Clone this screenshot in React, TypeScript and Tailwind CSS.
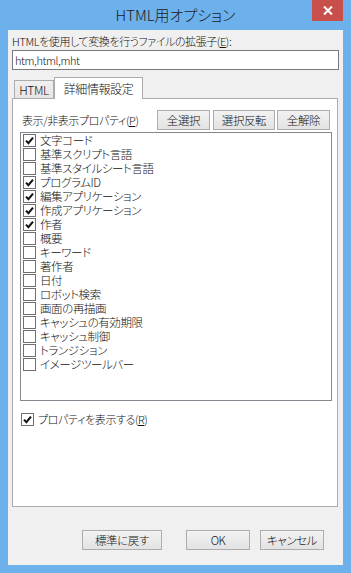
import React from "react";

const font = "font-['Noto_Sans_CJK_JP','Noto_Sans',sans-serif] [font-feature-settings:'palt']";

const props: [string, boolean][] = [
  ["文字コード", true],
  ["基準スクリプト言語", false],
  ["基準スタイルシート言語", false],
  ["プログラムID", true],
  ["編集アプリケーション", true],
  ["作成アプリケーション", true],
  ["作者", true],
  ["概要", false],
  ["キーワード", false],
  ["著作者", false],
  ["日付", false],
  ["ロボット検索", false],
  ["画面の再描画", false],
  ["キャッシュの有効期限", false],
  ["キャッシュ制御", false],
  ["トランジション", false],
  ["イメージツールバー", false],
];

function Check({ checked }: { checked: boolean }) {
  return (
    <span className="w-[13px] h-[13px] border border-[#707070] bg-white flex items-center justify-center shrink-0">
      {checked && (
        <svg width="9" height="9" viewBox="0 0 9 9">
          <path d="M1 4.6 L3.4 7.2 L8 1.6" stroke="#151515" strokeWidth="2.1" fill="none" />
        </svg>
      )}
    </span>
  );
}

function Btn({ w, children }: { w: string; children: React.ReactNode }) {
  return (
    <button
      className={`${w} h-[20px] border border-[#adadad] bg-gradient-to-b from-[#f2f2f2] to-[#e3e3e3] text-[11.5px] leading-[18px] text-[#111] flex items-center justify-center`}
    >
      {children}
    </button>
  );
}

export default function App() {
  return (
    <div className={`w-[351px] h-[573px] bg-[#6cb0ec] flex flex-col ${font} font-light text-[11px] tracking-[-0.4px] text-[#111]`}>
      {/* Title bar */}
      <div className="relative h-[30px] flex items-center justify-center">
        <span className="text-[15px] tracking-normal text-[#1c1c1c] pt-[1px]">HTML用オプション</span>
        <div className="absolute right-[8px] top-0 w-[31px] h-[21px] bg-[#c7504b] flex items-center justify-center">
          <svg width="10" height="9" viewBox="0 0 10 9">
            <path d="M1 0.5 L9 8.5 M9 0.5 L1 8.5" stroke="#fff" strokeWidth="2" />
          </svg>
        </div>
      </div>

      {/* Client area */}
      <div className="mx-[8px] h-[535px] bg-[#f0f0f0] flex flex-col px-[4px] pt-[4px]">
        <div className="h-[14px] leading-[14px]">HTMLを使用して変換を行うファイルの拡張子(<span className="underline">E</span>):</div>
        <div className="mt-[2px] h-[20px] border border-[#7a7a7a] bg-white flex items-center pl-[2px]">htm,html,mht</div>

        {/* Tabs */}
        <div className="mt-[7px] h-[21px] flex items-end pl-[2px] relative z-10">
          <div className="w-[40px] h-[18px] border border-[#acacac] border-b-0 bg-gradient-to-b from-[#f0f0f0] to-[#e5e5e5] flex items-center justify-center text-[12px]">
            HTML
          </div>
          <div className="w-[89px] h-[22px] -mb-[1px] border border-[#acacac] border-b-0 bg-white flex items-center justify-center text-[12px]">
            詳細情報設定
          </div>
        </div>
        <div className="w-[326px] h-[409px] border border-[#acacac] bg-white flex flex-col">
          <div className="mt-[11px] flex items-center">
            <span className="pl-[9px]">表示/非表示プロパティ(<span className="underline">P</span>)</span>
            <div className="ml-auto mr-[7px] flex">
              <Btn w="w-[53px]">全選択</Btn>
              <span className="w-[3px]" />
              <Btn w="w-[62px]">選択反転</Btn>
              <span className="w-[2px]" />
              <Btn w="w-[53px]">全解除</Btn>
            </div>
          </div>
          <div className="ml-[7px] mt-[2px] w-[312px] h-[269px] border border-[#828790] bg-white flex flex-col">
            {props.map(([label, checked]) => (
              <div key={label} className="h-[14px] flex items-center gap-[4px] pl-[2px]">
                <Check checked={checked} />
                <span className="leading-[13px] text-[11.5px]">{label}</span>
              </div>
            ))}
          </div>
          <div className="mt-[11px] ml-[8px] h-[14px] flex items-center gap-[4px]">
            <Check checked={true} />
            <span className="leading-[13px]">プロパティを表示する(<span className="underline">R</span>)</span>
          </div>
        </div>

        {/* Dialog buttons */}
        <div className="mt-[23px] flex justify-end pr-[15px]">
          <Btn w="w-[80px]">標準に戻す</Btn>
          <span className="w-[24px]" />
          <Btn w="w-[64px]">OK</Btn>
          <span className="w-[10px]" />
          <Btn w="w-[64px]">キャンセル</Btn>
        </div>
      </div>
    </div>
  );
}
